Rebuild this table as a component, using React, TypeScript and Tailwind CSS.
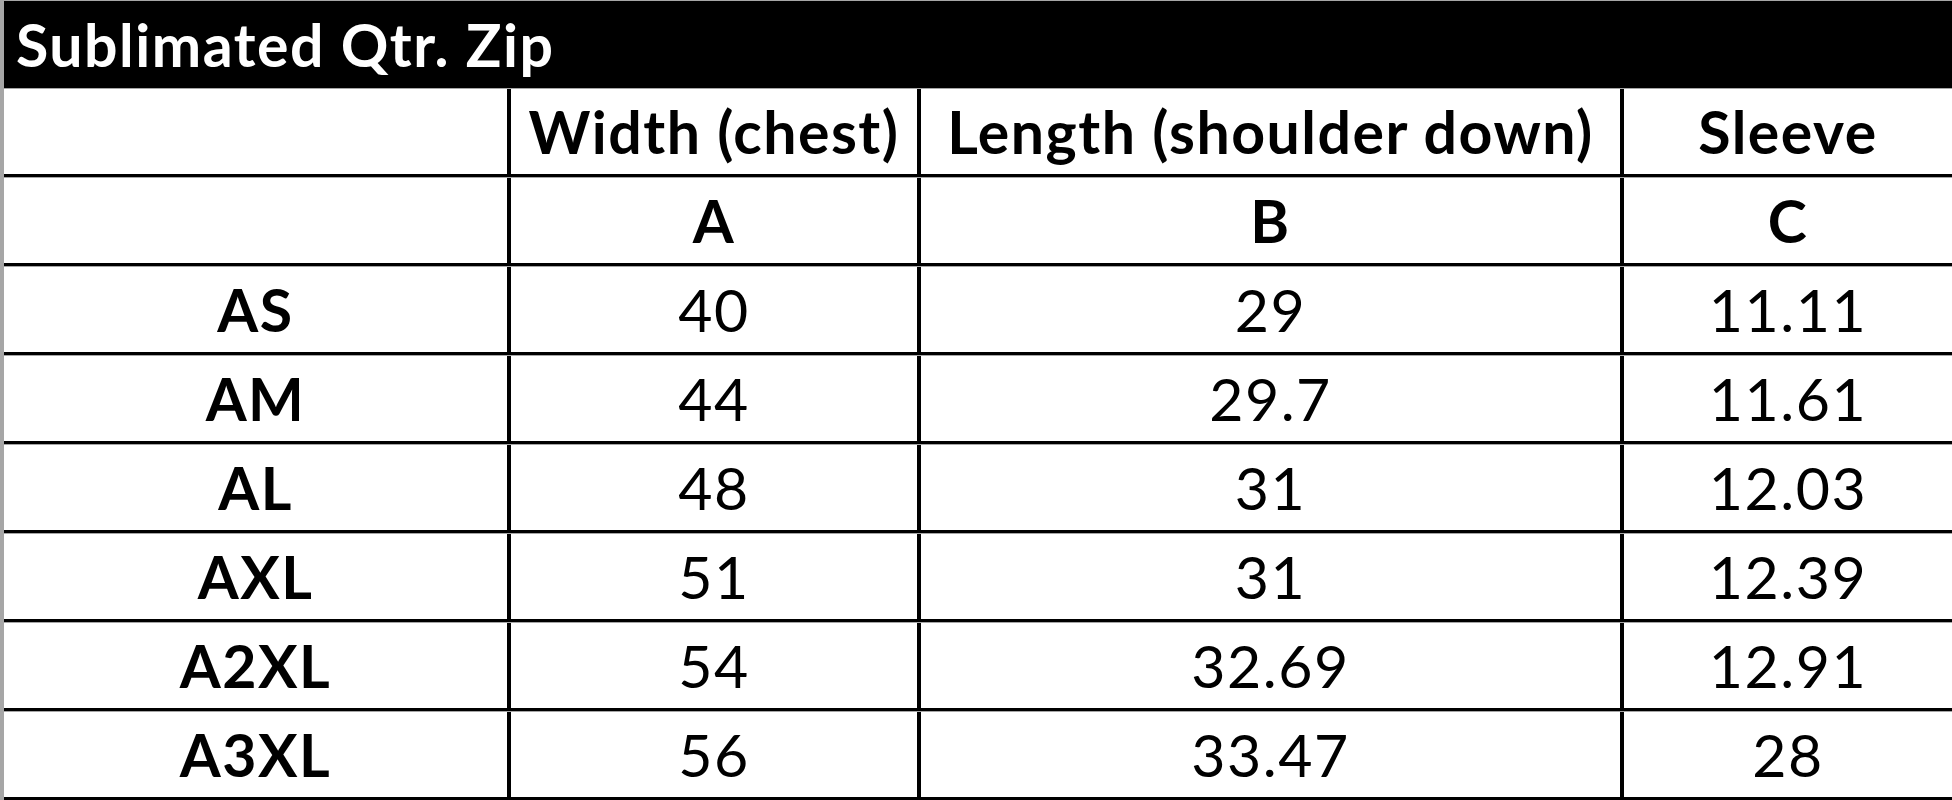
import React from "react";

const rows = [
	["AS", "40", "29", "11.11"],
	["AM", "44", "29.7", "11.61"],
	["AL", "48", "31", "12.03"],
	["AXL", "51", "31", "12.39"],
	["A2XL", "54", "32.69", "12.91"],
	["A3XL", "56", "33.47", "28"],
];

const Row = ({ cells, bold }: { cells: string[]; bold?: boolean[] }) => (
	<div className="flex h-[89px] border-t border-t-[#a6a6a6] border-b-[3px] border-b-black">
		<div className={`w-[503px] flex items-center justify-center ${bold?.[0] ? "font-bold" : ""}`}>{cells[0]}</div>
		<div className={`w-[410px] border-l-4 border-black flex items-center justify-center ${bold?.[1] ? "font-bold" : ""}`}>{cells[1]}</div>
		<div className={`w-[703px] border-l-4 border-black flex items-center justify-center ${bold?.[2] ? "font-bold" : ""}`}>{cells[2]}</div>
		<div className={`flex-1 border-l-4 border-black flex items-center justify-center ${bold?.[3] ? "font-bold" : ""}`}>{cells[3]}</div>
	</div>
);

export default function App() {
	return (
		<div className="w-[1952px] h-[800px] overflow-hidden bg-white border-l-4 border-l-[#a6a6a6] text-black font-['Lato',sans-serif] text-[59px] tracking-[1.5px] leading-none">
			<div className="h-[88px] bg-black border-t border-t-[#a6a6a6] flex items-center pl-[12px] text-white font-bold">
				Sublimated Qtr. Zip
			</div>
			<Row cells={["", "Width (chest)", "Length (shoulder down)", "Sleeve"]} bold={[true, true, true, true]} />
			<Row cells={["", "A", "B", "C"]} bold={[true, true, true, true]} />
			{rows.map((r) => (
				<Row key={r[0]} cells={r} bold={[true, false, false, false]} />
			))}
		</div>
	);
}
